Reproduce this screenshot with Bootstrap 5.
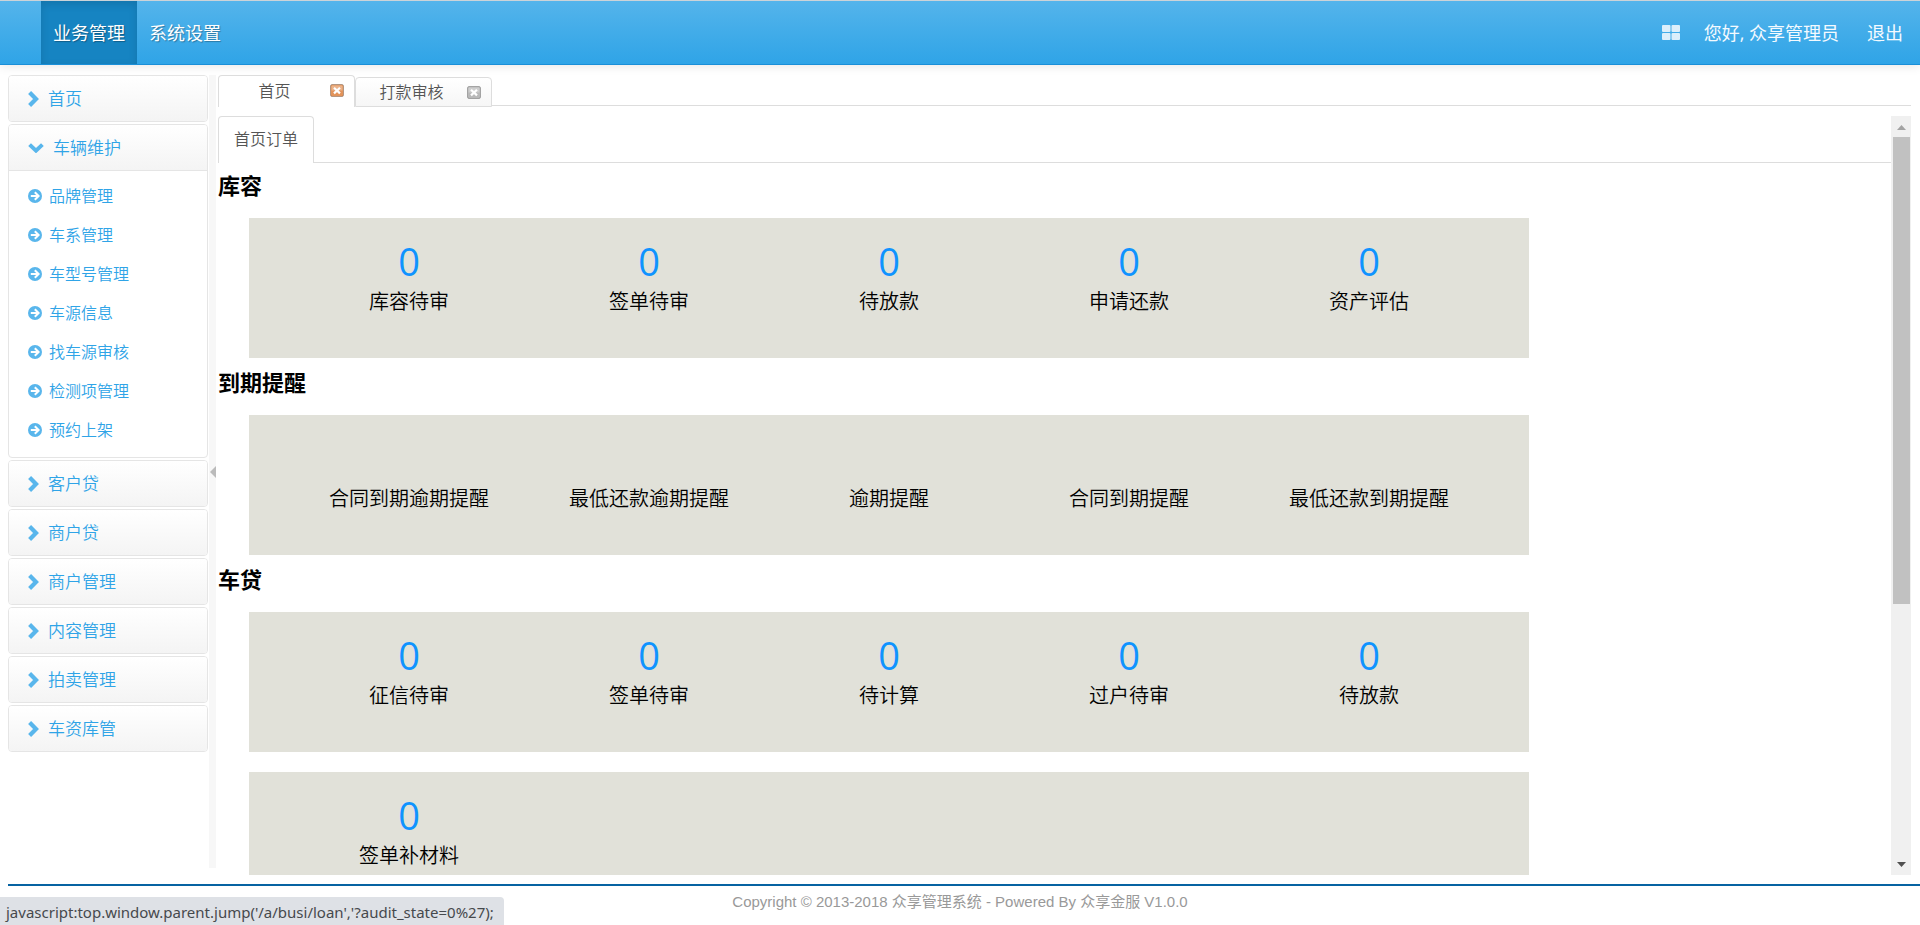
<!DOCTYPE html>
<html lang="zh-CN">
<head>
<meta charset="utf-8">
<meta name="viewport" content="width=device-width, initial-scale=1">
<title>众享管理系统</title>
<link rel="stylesheet" href="https://cdn.jsdelivr.net/npm/bootstrap@5.3.0/dist/css/bootstrap.min.css">
<style>
  body { font-family: "Open Sans", "Noto Sans CJK SC", sans-serif; font-size: 16px; line-height: 20px; color: #555; font-weight: 350; }
  a { text-decoration: none; }
  svg { display: block; flex: none; }

  .topbar { height: 65px; padding: 0 5px 0 41px; border-top: 1px solid #ccd3d8; border-bottom: 1px solid #1a8fd8; background: linear-gradient(#54b4eb, #2fa4e7); box-shadow: 0 1px 10px rgba(0,0,0,.1); font-size: 18px; font-weight: 400; }
  .topbar a { display: flex; align-items: center; padding: 0 12px; color: #fff; text-shadow: 1px 1px 1px rgba(0,0,0,.3); }
  .topbar a.active { background: #1684c2; box-shadow: inset 0 3px 8px rgba(0,0,0,.125); }
  .topbar .user-links { gap: 4px; }
  .topbar .user-links a { text-shadow: none; color: #f4faff; }

  .workspace { padding: 10px 9px 0 8px; }
  .sidebar { width: 200px; font-size: 17px; }
  .menu-group { border: 1px solid #e5e5e5; border-radius: 4px; margin-bottom: 2px; overflow: hidden; }
  .menu-group > button { display: flex; align-items: center; gap: 9px; width: 100%; height: 45px; padding: 0 19px; border: 0; background: linear-gradient(#fff, #f4f4f4); color: #2fa4e7; font-weight: inherit; }
  .menu-group svg, .submenu svg { color: #59b6ec; }
  .submenu { border-top: 1px solid #e5e5e5; padding: 5px 0 8px 19px; font-size: 16px; }
  .submenu a { display: flex; align-items: center; gap: 7px; height: 39px; color: #2fa4e7; }

  .splitter { width: 7px; margin: 0 2px 7px 1px; background: #f7f7f7; color: #bbb; }

  .page-tabs { border-bottom: 1px solid #ddd; height: 31px; }
  .page-tab { width: 137px; height: 30px; margin-bottom: -2px; padding: 0 10px 0 0; border: 1px solid #ddd; border-radius: 4px 4px 0 0; background: linear-gradient(#fff, #f6f6f6); }
  .page-tab.active { height: 32px; padding-bottom: 2px; border-bottom: 0; background: #fff; }
  .page-tab button { border: 0; padding: 0; background: none; color: #555; font-weight: inherit; }
  .page-tab .tab-name { flex: 1; text-align: center; }

  .frame { margin-top: 10px; }
  .inner-tabs { height: 47px; border-bottom: 1px solid #ddd; }
  .inner-tabs a { display: flex; align-items: center; height: 47px; padding: 0 15px 2px; border: 1px solid #ddd; border-bottom: 0; border-radius: 4px 4px 0 0; background: #fff; color: #555; }
  .frame h2 { margin: 0; padding: 11px 0 20px; font-size: 22px; line-height: 26px; font-weight: 700; color: #000; }
  .frame .inner-tabs + h2 { padding-top: 9px; }
  .tile-panel { height: 140px; max-width: 1280px; margin: 0 0 0 31px; padding: 24px 40px 0; background: #e1e1d9; text-align: center; color: #000; font-size: 20px; }
  .tile-panel + .tile-panel { margin-top: 20px; }
  .tile-panel > div { width: 20%; }
  .tile-panel a { display: block; height: 40px; font-size: 38px; line-height: 38px; font-weight: 400; color: #0f93ff; }
  .tile-panel span { display: block; line-height: 40px; }

  .scroll-track { width: 20px; padding: 9px 1px 8px 2px; background: #f0f0f0; }
  .scroll-thumb { height: 63%; margin-top: 7px; background: #c1c1c1; }

  .page-foot { height: 41px; margin: 9px 0 0 8px; padding: 6px 8px 0 0; border-top: 2px solid #0663a2; text-align: center; font: 15px/20px "Liberation Sans", "Noto Sans CJK SC", sans-serif; color: #999; }
  .status-hint { position: fixed; left: 0; bottom: 0; height: 28px; padding: 0 10px 0 6px; border-radius: 0 4px 0 0; background: #dee1e6; color: #46494d; font: 400 15px/30px "Noto Sans", sans-serif; }
</style>
</head>
<body class="vh-100 d-flex flex-column overflow-hidden bg-white">

<svg class="d-none" aria-hidden="true">
  <symbol id="chev-right" viewBox="0 0 11 16"><path d="M1.600 1.600 8 8l-6.400 6.400" fill="none" stroke="currentColor" stroke-width="4.200"/></symbol>
  <symbol id="chev-down" viewBox="0 0 16 10"><path d="M1.600 1.600 8 7.600l6.400-6" fill="none" stroke="currentColor" stroke-width="4"/></symbol>
  <symbol id="go" viewBox="0 0 14 14"><circle cx="7" cy="7" r="7" fill="currentColor"/><path d="M2.800 7h7M6.800 3.200 10.600 7l-3.800 3.800" fill="none" stroke="#fff" stroke-width="2"/></symbol>
  <symbol id="close" viewBox="0 0 14 13"><rect x=".5" y=".5" width="13" height="12" rx="1.500" fill="currentColor" stroke="#000" stroke-opacity=".25"/><rect x="1.500" y="1.500" width="11" height="5" fill="#fff" fill-opacity=".3"/><path d="m4 3.800 6 5.600m0-5.600L4 9.400" stroke="#fff" stroke-width="2.200"/></symbol>
</svg>

<header class="topbar d-flex justify-content-between flex-shrink-0">
  <nav class="d-flex">
    <a class="active" href="#">业务管理</a>
    <a href="#">系统设置</a>
  </nav>
  <nav class="user-links d-flex">
    <a class="pe-2" href="#" aria-label="主题"><svg width="18" height="15" viewBox="0 0 18 15" fill="#dceffb"><rect width="8.500" height="7" rx="1"/><rect x="9.500" width="8.500" height="7" rx="1"/><rect y="8" width="8.500" height="7" rx="1"/><rect x="9.500" y="8" width="8.500" height="7" rx="1"/></svg></a>
    <a href="#">您好, 众享管理员</a>
    <a href="#">退出</a>
  </nav>
</header>

<div class="workspace d-flex flex-grow-1" style="min-height:0">
  <aside class="sidebar flex-shrink-0">
    <div class="menu-group"><button type="button"><svg width="11" height="16"><use href="#chev-right"/></svg>首页</button></div>
    <div class="menu-group">
      <button type="button" aria-expanded="true"><svg width="16" height="10"><use href="#chev-down"/></svg>车辆维护</button>
      <div class="submenu">
        <a href="#"><svg width="14" height="14"><use href="#go"/></svg>品牌管理</a>
        <a href="#"><svg width="14" height="14"><use href="#go"/></svg>车系管理</a>
        <a href="#"><svg width="14" height="14"><use href="#go"/></svg>车型号管理</a>
        <a href="#"><svg width="14" height="14"><use href="#go"/></svg>车源信息</a>
        <a href="#"><svg width="14" height="14"><use href="#go"/></svg>找车源审核</a>
        <a href="#"><svg width="14" height="14"><use href="#go"/></svg>检测项管理</a>
        <a href="#"><svg width="14" height="14"><use href="#go"/></svg>预约上架</a>
      </div>
    </div>
    <div class="menu-group"><button type="button"><svg width="11" height="16"><use href="#chev-right"/></svg>客户贷</button></div>
    <div class="menu-group"><button type="button"><svg width="11" height="16"><use href="#chev-right"/></svg>商户贷</button></div>
    <div class="menu-group"><button type="button"><svg width="11" height="16"><use href="#chev-right"/></svg>商户管理</button></div>
    <div class="menu-group"><button type="button"><svg width="11" height="16"><use href="#chev-right"/></svg>内容管理</button></div>
    <div class="menu-group"><button type="button"><svg width="11" height="16"><use href="#chev-right"/></svg>拍卖管理</button></div>
    <div class="menu-group"><button type="button"><svg width="11" height="16"><use href="#chev-right"/></svg>车资库管</button></div>
  </aside>

  <div class="splitter d-flex align-items-center justify-content-end flex-shrink-0"><svg width="6" height="12" viewBox="0 0 6 12"><path d="M6 0v12L0 6z" fill="currentColor"/></svg></div>

  <main class="d-flex flex-column flex-grow-1" style="min-width:0">
    <div class="page-tabs d-flex align-items-end flex-shrink-0">
      <div class="page-tab active d-flex align-items-center"><button type="button" class="tab-name">首页</button><button type="button" aria-label="关闭首页"><svg width="14" height="13" color="#e2935a"><use href="#close"/></svg></button></div>
      <div class="page-tab d-flex align-items-center"><button type="button" class="tab-name">打款审核</button><button type="button" aria-label="关闭打款审核"><svg width="14" height="13" color="#b9b9b9"><use href="#close"/></svg></button></div>
    </div>

    <div class="frame d-flex flex-grow-1" style="min-height:0">
      <div class="flex-grow-1 overflow-hidden">
        <div class="inner-tabs d-flex"><a href="#">首页订单</a></div>

        <h2>库容</h2>
        <section class="tile-panel d-flex">
          <div><a href="#">0</a><span>库容待审</span></div>
          <div><a href="#">0</a><span>签单待审</span></div>
          <div><a href="#">0</a><span>待放款</span></div>
          <div><a href="#">0</a><span>申请还款</span></div>
          <div><a href="#">0</a><span>资产评估</span></div>
        </section>

        <h2>到期提醒</h2>
        <section class="tile-panel d-flex">
          <div><a href="#" aria-label="合同到期逾期提醒"></a><span>合同到期逾期提醒</span></div>
          <div><a href="#" aria-label="最低还款逾期提醒"></a><span>最低还款逾期提醒</span></div>
          <div><a href="#" aria-label="逾期提醒"></a><span>逾期提醒</span></div>
          <div><a href="#" aria-label="合同到期提醒"></a><span>合同到期提醒</span></div>
          <div><a href="#" aria-label="最低还款到期提醒"></a><span>最低还款到期提醒</span></div>
        </section>

        <h2>车贷</h2>
        <section class="tile-panel d-flex">
          <div><a href="#">0</a><span>征信待审</span></div>
          <div><a href="#">0</a><span>签单待审</span></div>
          <div><a href="#">0</a><span>待计算</span></div>
          <div><a href="#">0</a><span>过户待审</span></div>
          <div><a href="#">0</a><span>待放款</span></div>
        </section>
        <section class="tile-panel d-flex">
          <div><a href="#">0</a><span>签单补材料</span></div>
        </section>
      </div>

      <div class="scroll-track d-flex flex-column flex-shrink-0" aria-hidden="true">
        <svg class="mx-auto" width="9" height="5" viewBox="0 0 9 5"><path d="M0 5 4.500 0 9 5z" fill="#a3a3a3"/></svg>
        <div class="scroll-thumb"></div>
        <svg class="mx-auto mt-auto" width="9" height="5" viewBox="0 0 9 5"><path d="M0 0h9L4.500 5z" fill="#505050"/></svg>
      </div>
    </div>
  </main>
</div>

<footer class="page-foot flex-shrink-0">Copyright © 2013-2018 众享管理系统 - Powered By 众享金服 V1.0.0</footer>
<div class="status-hint">javascript:top.window.parent.jump('/a/busi/loan','?audit_state=0%27);</div>

<script src="https://cdn.jsdelivr.net/npm/bootstrap@5.3.0/dist/js/bootstrap.bundle.min.js"></script>
</body>
</html>
